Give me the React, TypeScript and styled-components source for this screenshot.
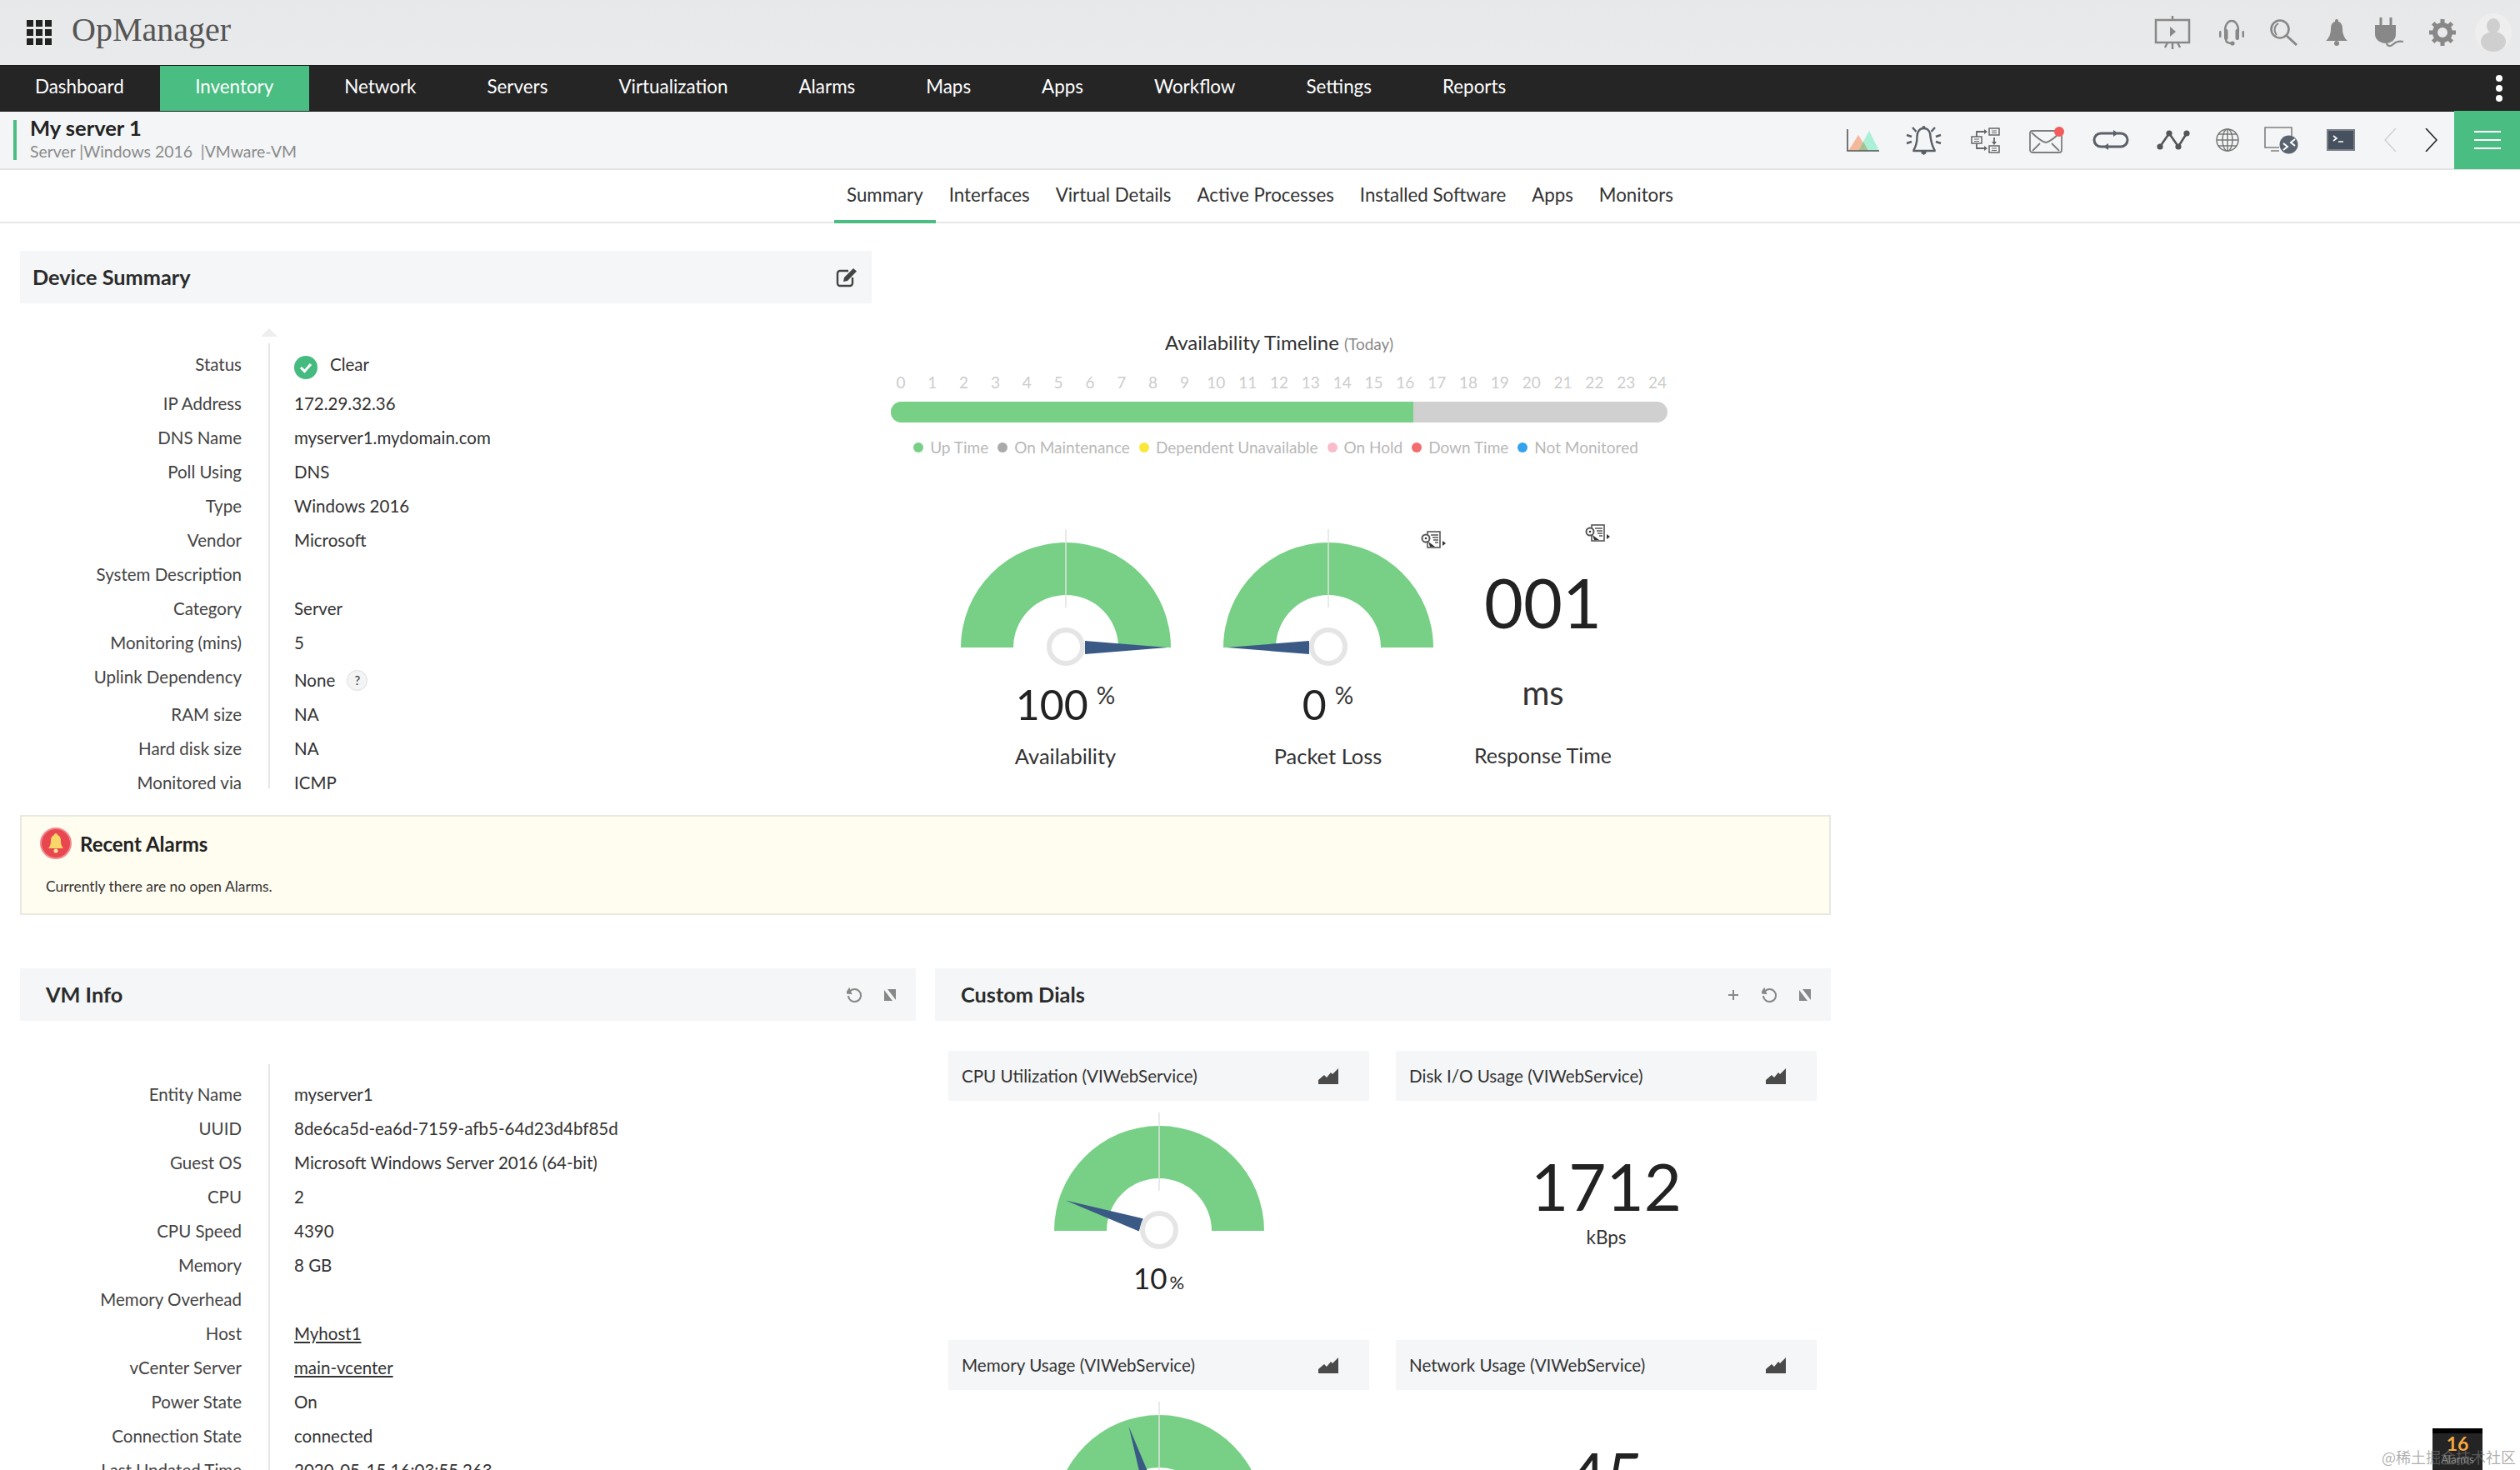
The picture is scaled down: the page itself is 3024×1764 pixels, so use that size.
import React from 'react';
import styled, { createGlobalStyle } from 'styled-components';

const GlobalStyle = createGlobalStyle`
  html, body {
    margin: 0;
    padding: 0;
    background: #fff;
    font-family: Lato, "Open Sans", sans-serif;
    color: #333;
  }
`;

const Page = styled.div`
  position: relative;
  width: 3024px;
  height: 1764px;
  overflow: hidden;
  background: #fff;
`;

const TopBar = styled.header`
  height: 78px;
  display: flex;
  align-items: center;
  background: linear-gradient(#e7e8e9, #e9eaeb);
`;

const AppGrid = styled.svg`
  width: 30px;
  height: 30px;
  margin-left: 32px;
`;

const Logo = styled.div`
  margin-left: 24px;
  font-family: "Liberation Serif", serif;
  font-size: 40px;
  color: #555;
  line-height: 72px;
  height: 78px;
`;

const TopIcons = styled.div`
  margin-left: auto;
  display: flex;
  align-items: center;
  height: 100%;
`;

const IconSlot = styled.div<{ $w: number }>`
  width: ${({ $w }) => $w}px;
  height: 100%;
  display: flex;
  align-items: center;
  justify-content: center;
  flex: none;
`;

const NavBar = styled.nav`
  height: 56px;
  display: flex;
  background: #252525;
  border-top: 1px solid #1a1a1a;
  border-bottom: 1px solid #1a1a1a;
  box-sizing: border-box;
`;

const NavItem = styled.div<{ $active?: boolean }>`
  padding: 0 42.5px;
  font-size: 22.4px;
  line-height: 50px;
  color: #fff;
  background: ${({ $active }) => ($active ? '#4abd83' : 'transparent')};
  &:first-child {
    padding-left: 42px;
    padding-right: 43px;
  }
`;

const NavDots = styled.div`
  margin-left: auto;
  padding-right: 21px;
  display: flex;
  flex-direction: column;
  justify-content: center;
  gap: 4px;
`;

const NavDot = styled.span`
  width: 8px;
  height: 8px;
  border-radius: 50%;
  background: #fff;
`;

const DeviceBar = styled.div`
  display: flex;
  align-items: center;
  background: #f3f5f6;
  border-bottom: 2px solid #e3e4e5;
  height: 68px;
`;

const AccentBar = styled.span`
  width: 4px;
  height: 48px;
  margin-left: 16px;
  background: #4abd83;
`;

const DeviceTitle = styled.div`
  margin: -3px 0 0 16px;
`;

const DeviceName = styled.div`
  font-size: 25.5px;
  font-weight: 700;
  line-height: 30px;
  color: #222;
`;

const DeviceMeta = styled.div`
  font-size: 19.4px;
  line-height: 28px;
  color: #8a8a8a;
`;

const DeviceActions = styled.div`
  margin-left: auto;
  display: flex;
  height: 100%;
  align-items: center;
`;

const MenuBlock = styled.div`
  width: 79px;
  height: 70px;
  margin-left: 3px;
  background: #4abd83;
  display: flex;
  align-items: center;
  justify-content: center;
`;

const Tabs = styled.div`
  height: 62px;
  display: flex;
  justify-content: center;
  border-bottom: 2px solid #e6e7e8;
`;

const Tab = styled.div<{ $active?: boolean }>`
  padding: 0 15.5px;
  font-size: 22.3px;
  line-height: 60px;
  height: 64px;
  box-sizing: border-box;
  color: #333;
  border-bottom: 4px solid ${({ $active }) => ($active ? '#4abd83' : 'transparent')};
`;

const Content = styled.main`
  width: 2173px;
  margin-left: 24px;
`;

const SummaryRow = styled.section`
  display: flex;
  padding-top: 33px;
`;

const SummaryLeft = styled.div`
  width: 1022px;
  flex: none;
`;

const SummaryRight = styled.div`
  flex: 1;
  padding-top: 96px;
`;

const PanelHeader = styled.div<{ $inset: number; $right?: number }>`
  height: 63px;
  display: flex;
  align-items: center;
  justify-content: space-between;
  padding: 0 ${({ $right }) => $right ?? 24}px 0 ${({ $inset }) => $inset}px;
  background: #f4f6f7;
`;

const PanelTitle = styled.h2`
  margin: 0 0 2px;
  font-size: 25.3px;
  font-weight: 700;
  color: #2b2b2b;
`;

const PanelTools = styled.div`
  display: flex;
  align-items: center;
  gap: 27px;
`;

const InfoList = styled.div<{ $top: number }>`
  position: relative;
  margin-top: ${({ $top }) => $top}px;
  &::before {
    content: '';
    position: absolute;
    left: 298px;
    top: 0;
    bottom: 14px;
    width: 2px;
    background: #e6e6e6;
  }
`;

const InfoCaret = styled.span`
  position: absolute;
  left: 289px;
  top: -18px;
  border-left: 10px solid transparent;
  border-right: 10px solid transparent;
  border-bottom: 10px solid #eeeeee;
`;

const InfoRow = styled.div<{ $h?: number; $shift?: number }>`
  display: grid;
  grid-template-columns: 266px 1fr;
  column-gap: 63px;
  height: ${({ $h }) => $h ?? 41}px;
  padding-top: ${({ $shift }) => $shift ?? 0}px;
  box-sizing: border-box;
  font-size: 20.5px;
  line-height: 40px;
`;

const InfoLabel = styled.div`
  text-align: right;
  color: #444;
`;

const InfoValue = styled.div<{ $drop?: number }>`
  display: flex;
  align-items: center;
  height: 40px;
  padding-top: ${({ $drop }) => $drop ?? 0}px;
  color: #333;
`;

const ValueLink = styled.span`
  text-decoration: underline;
`;

const StatusIcon = styled.svg`
  width: 28px;
  height: 28px;
  margin: 8px 15px 0 0;
`;

const HelpBadge = styled.span`
  width: 25px;
  height: 25px;
  margin-left: 14px;
  border-radius: 50%;
  background: #f4f4f4;
  border: 1px solid #dedede;
  box-sizing: border-box;
  font-size: 15px;
  line-height: 23px;
  text-align: center;
`;

const TimelineTitle = styled.div`
  padding-left: 23px;
  width: 932px;
  text-align: center;
  font-size: 24px;
  line-height: 28px;
  color: #333;
`;

const TimelineToday = styled.span`
  font-size: 19px;
  color: #888;
`;

const Hours = styled.div`
  display: grid;
  grid-template-columns: repeat(25, 1fr);
  width: 946px;
  margin: 21px 0 0 16px;
  font-size: 19px;
  line-height: 22px;
  text-align: center;
  color: #cccccc;
`;

const TimelineBar = styled.div`
  width: 932px;
  height: 25px;
  margin: 12px 0 0 23px;
  border-radius: 13px;
  background: #d0d0d0;
  overflow: hidden;
`;

const TimelineFill = styled.div`
  height: 100%;
  background: #77d086;
`;

const Legend = styled.div`
  display: flex;
  justify-content: center;
  gap: 11px;
  width: 932px;
  margin: 19px 0 0 19px;
  font-size: 19px;
  line-height: 22px;
  color: #b8b8b8;
`;

const LegendItem = styled.div`
  display: flex;
  align-items: center;
  gap: 8px;
`;

const LegendDot = styled.span<{ $color: string }>`
  width: 12px;
  height: 12px;
  border-radius: 50%;
  background: ${({ $color }) => $color};
`;

const GaugeRow = styled.div`
  display: grid;
  grid-template-columns: 315px 315px 201px;
  margin: 87px 0 0 75px;
`;

const GaugeCell = styled.div`
  position: relative;
  display: flex;
  flex-direction: column;
  align-items: center;
`;

const GaugeSvg = styled.svg`
  width: 272px;
  height: 168px;
  display: block;
`;

const ReportIcon = styled.svg<{ $left: number; $top: number }>`
  position: absolute;
  left: ${({ $left }) => $left}px;
  top: ${({ $top }) => $top}px;
  width: 30px;
  height: 21px;
`;

const GaugeValue = styled.div`
  display: flex;
  align-items: flex-start;
  gap: 10px;
  margin-top: 12px;
  height: 60px;
  font-size: 50px;
  line-height: 60px;
  color: #222;
`;

const GaugeUnit = styled.span`
  font-size: 28px;
  line-height: 38px;
  color: #333;
`;

const GaugeLabel = styled.div`
  margin-top: 17px;
  font-size: 25.5px;
  line-height: 30px;
  color: #333;
`;

const BigNumber = styled.div`
  font-size: 81px;
  line-height: 90px;
  color: #222;
`;

const ResponseValue = styled(BigNumber)`
  margin-top: 43px;
`;

const ResponseUnit = styled.div`
  margin-top: 38px;
  font-size: 40px;
  line-height: 50px;
  color: #333;
`;

const ResponseLabel = styled(GaugeLabel)`
  margin-top: 35px;
  font-size: 25px;
`;

const AlarmBox = styled.section`
  height: 120px;
  margin-top: 18px;
  padding: 13px 0 0 22px;
  box-sizing: border-box;
  background: #fffcf0;
  border: 2px solid #e9e9e2;
`;

const AlarmHead = styled.div`
  display: flex;
  align-items: center;
  gap: 10px;
  height: 38px;
`;

const AlarmIcon = styled.svg`
  width: 38px;
  height: 38px;
`;

const AlarmTitle = styled.div`
  font-size: 24px;
  font-weight: 700;
  color: #222;
`;

const AlarmText = styled.div`
  margin-top: 21px;
  padding-left: 7px;
  font-size: 17.4px;
  line-height: 24px;
  color: #333;
`;

const LowerRow = styled.section`
  display: grid;
  grid-template-columns: 1075px 1075px;
  column-gap: 23px;
  margin-top: 64px;
`;

const DialGrid = styled.div`
  display: grid;
  grid-template-columns: 505px 505px;
  column-gap: 32px;
  padding: 36px 0 0 16px;
`;

const DialCard = styled.div`
  height: 347px;
`;

const DialHeader = styled.div`
  height: 60px;
  display: flex;
  align-items: center;
  justify-content: space-between;
  padding: 0 37px 0 16px;
  background: #f4f6f7;
  font-size: 20.6px;
  line-height: 54px;
  color: #333;
`;

const DialBody = styled.div`
  display: flex;
  flex-direction: column;
  align-items: center;
  padding-top: 14px;
`;

const DialValue = styled.div`
  display: flex;
  align-items: baseline;
  gap: 3px;
  margin-top: 10px;
  font-size: 35px;
  line-height: 40px;
  color: #222;
`;

const DialPercent = styled.span`
  font-size: 22px;
`;

const DialNumber = styled(BigNumber)`
  margin-top: 43px;
  font-size: 78px;
`;

const DialUnit = styled.div`
  margin-top: 2px;
  font-size: 22.5px;
  line-height: 30px;
  color: #333;
`;

const AlarmBadge = styled.div`
  position: absolute;
  left: 2919px;
  top: 1714px;
  width: 60px;
  height: 50px;
  box-sizing: border-box;
  background: #242424;
  border-top: 6px solid #000;
  text-align: center;
`;

const BadgeCount = styled.div`
  font-size: 23px;
  font-weight: 700;
  line-height: 24px;
  color: #f5a742;
`;

const BadgeLabel = styled.div`
  font-size: 13px;
  line-height: 14px;
  color: #8f8f8f;
`;

const Watermark = styled.div`
  position: absolute;
  left: 2858px;
  top: 1736px;
  font-family: "Noto Sans CJK SC", sans-serif;
  font-size: 18px;
  line-height: 24px;
  color: rgba(120, 120, 120, 0.6);
  white-space: nowrap;
`;

const navItems = ['Dashboard', 'Inventory', 'Network', 'Servers', 'Virtualization', 'Alarms', 'Maps', 'Apps', 'Workflow', 'Settings', 'Reports'];
const tabs = ['Summary', 'Interfaces', 'Virtual Details', 'Active Processes', 'Installed Software', 'Apps', 'Monitors'];
const legend = [
  ['Up Time', '#77d086'],
  ['On Maintenance', '#aaaaaa'],
  ['Dependent Unavailable', '#fbe73a'],
  ['On Hold', '#f9bccb'],
  ['Down Time', '#f26d6d'],
  ['Not Monitored', '#35a2ec'],
];
const vmInfo: [string, React.ReactNode][] = [
  ['Entity Name', 'myserver1'],
  ['UUID', '8de6ca5d-ea6d-7159-afb5-64d23d4bf85d'],
  ['Guest OS', 'Microsoft Windows Server 2016 (64-bit)'],
  ['CPU', '2'],
  ['CPU Speed', '4390'],
  ['Memory', '8 GB'],
  ['Memory Overhead', ''],
  ['Host', <ValueLink>Myhost1</ValueLink>],
  ['vCenter Server', <ValueLink>main-vcenter</ValueLink>],
  ['Power State', 'On'],
  ['Connection State', 'connected'],
  ['Last Updated Time', '2020-05-15 16:03:55.263'],
];

const Gauge: React.FC<{ percent: number; reach?: number }> = ({ percent, reach = 122 }) => {
  const a = ((180 - percent * 1.8) * Math.PI) / 180;
  const ux = Math.cos(a);
  const uy = -Math.sin(a);
  const base = 23;
  const tip = `${(ux * reach).toFixed(1)},${(uy * reach).toFixed(1)}`;
  const b1 = `${(ux * base - uy * 8).toFixed(1)},${(uy * base + ux * 8).toFixed(1)}`;
  const b2 = `${(ux * base + uy * 8).toFixed(1)},${(uy * base - ux * 8).toFixed(1)}`;
  return (
    <GaugeSvg viewBox="-136 -142 272 168">
      <path d="M-126 0A126 126 0 0 1 126 0L63 0A63 63 0 0 0 -63 0Z" fill="#77d086" />
      <line x1="0" y1="-142" x2="0" y2="-48" stroke="#dfe3df" strokeWidth="1.5" />
      <polygon points={`${tip} ${b1} ${b2}`} fill="#3a5a85" />
      <circle cx="0" cy="-1" r="20" fill="#fff" stroke="#e5e5e5" strokeWidth="6" />
    </GaugeSvg>
  );
};

const Report: React.FC<{ left: number; top: number }> = ({ left, top }) => (
  <ReportIcon $left={left} $top={top} viewBox="0 0 30 21" fill="none">
    <rect x="8" y="1" width="15" height="19" fill="#fff" stroke="#555" strokeWidth="1.6" />
    <path d="M12 5h9M14 8h7M15 11h6M17 14h4" stroke="#555" strokeWidth="1.3" />
    <circle cx="6" cy="9" r="4.5" fill="#fff" stroke="#555" strokeWidth="2" />
    <circle cx="6" cy="9" r="1.3" fill="#333" />
    <path d="M9 13l8 6h-6z" fill="#333" />
    <path d="M26 12l4 3-4 3z" fill="#333" />
  </ReportIcon>
);

const Refresh = () => (
  <svg width="18" height="20" viewBox="0 0 18 20" fill="none" stroke="#888" strokeWidth="2">
    <path d="M3.5 6A7.5 7.5 0 1 1 2 11" />
    <path d="M0 7.5l3-4.5 2 5z" fill="#888" />
  </svg>
);

const Collapse = () => (
  <svg width="14" height="14" viewBox="0 0 14 14" fill="#888">
    <polygon points="0,1 0,14 10,14" />
    <polygon points="4,0 14,0 14,13" />
  </svg>
);

const Plus = () => (
  <svg width="14" height="14" viewBox="0 0 14 14" stroke="#888" strokeWidth="2">
    <path d="M7 1v12M1 7h12" />
  </svg>
);

const Edit = () => (
  <svg width="26" height="24" viewBox="0 0 26 24" fill="none" stroke="#444" strokeWidth="2.4">
    <path d="M20 12v7a3 3 0 0 1-3 3H5a3 3 0 0 1-3-3V7a3 3 0 0 1 3-3h10" />
    <path d="M9 17l1-5L21 1l4 3.5L14 16z" fill="#444" stroke="none" />
  </svg>
);

const MiniChart = () => (
  <svg width="24" height="19" viewBox="0 0 24 19" fill="#4a4a4a">
    <polygon points="0,19 0,14 7,8 10,11 15,5 17,7 24,0 24,19" />
  </svg>
);

const iconGray = '#888';

const PresentIcon = () => (
  <svg width="44" height="40" viewBox="0 0 44 40" fill="none" stroke={iconGray} strokeWidth="2.5">
    <rect x="2" y="5" width="40" height="27" />
    <path d="M22 0v5M22 32v8M13 38l3-6M31 38l-3-6" />
    <path d="M19 13l7 6-7 6z" fill={iconGray} stroke="none" />
  </svg>
);

const HeadsetIcon = () => (
  <svg width="30" height="32" viewBox="0 0 30 32" fill="none" stroke={iconGray} strokeWidth="2.4">
    <path d="M7 14C7 -2 23 -2 23 14" />
    <path d="M8 24c0 4 3 5 7 5" />
    <rect x="6" y="12" width="4.5" height="13" rx="2" fill={iconGray} stroke="none" />
    <rect x="19.500" y="12" width="4.5" height="13" rx="2" fill={iconGray} stroke="none" />
    <rect x="0" y="14" width="2.5" height="8" rx="1.2" fill={iconGray} stroke="none" />
    <rect x="27.500" y="14" width="2.5" height="8" rx="1.2" fill={iconGray} stroke="none" />
    <circle cx="16" cy="29" r="2.6" fill={iconGray} stroke="none" />
  </svg>
);

const SearchIcon = () => (
  <svg width="34" height="32" viewBox="0 0 34 32" fill="none" stroke={iconGray}>
    <circle cx="13" cy="12" r="10.5" strokeWidth="2.6" />
    <path d="M9 19C5 14 6 8 11 5" strokeWidth="2" />
    <path d="M21 20l12 11" strokeWidth="3" />
  </svg>
);

const BellIcon = () => (
  <svg width="26" height="32" viewBox="0 0 26 32" fill={iconGray}>
    <path d="M13 0c2 0 2 2 2 3 4 1 5 5 5 9 0 5 2 11 6 14H0c4-3 6-9 6-14 0-4 1-8 5-9 0-1 0-3 2-3z" />
    <circle cx="13" cy="29" r="3" />
  </svg>
);

const PlugIcon = () => (
  <svg width="36" height="36" viewBox="0 0 36 36" fill="none" stroke={iconGray}>
    <path d="M8 0v9M20 0v9" strokeWidth="3" />
    <path d="M1 9h25v11c0 7-6 11-12 11S1 27 1 20z" fill={iconGray} stroke="none" />
    <path d="M15 31c1 4 5 4 8 1s6-4 12-3" strokeWidth="2.2" />
  </svg>
);

const GearIcon = () => (
  <svg width="32" height="32" viewBox="0 0 32 32" fill="none" stroke={iconGray}>
    <circle cx="16" cy="16" r="9" strokeWidth="6" />
    <path d="M16 0v6M16 26v6M0 16h6M26 16h6M4.700 4.700l4.200 4.200M23.100 23.100l4.200 4.200M4.700 27.300l4.200-4.200M23.100 8.900l4.200-4.200" strokeWidth="5" />
  </svg>
);

const AvatarIcon = () => (
  <svg width="44" height="46" viewBox="0 0 44 46">
    <rect x="0" y="0" width="44" height="46" rx="22" fill="#eeeeee" />
    <ellipse cx="22" cy="15" rx="8" ry="9" fill="#cfcfcf" />
    <ellipse cx="22" cy="34" rx="15" ry="12" fill="#cfcfcf" />
  </svg>
);

const AreaIcon = () => (
  <svg width="40" height="28" viewBox="0 0 40 28">
    <polygon points="2,27 14,8 26,27" fill="#f4b99c" />
    <polygon points="14,27 27,3 39,27" fill="#abefd6" />
    <polygon points="14,27 20,16 26,27" fill="#a8bf8f" />
    <path d="M1 1v26h38" fill="none" stroke="#555" strokeWidth="1.6" />
  </svg>
);

const AlarmActionIcon = () => (
  <svg width="43" height="35" viewBox="0 0 43 35" fill="none" stroke="#5a5f66" strokeWidth="2.4">
    <path d="M21.500 3c-5 0-8 4-8 10 0 7-1 11-4 16v1h25v-1c-3-5-4-9-5-16 0-6-3-10-8-10z" />
    <circle cx="21.500" cy="2" r="2" fill="#5a5f66" stroke="none" />
    <path d="M18.500 31h6v2l-3 2-3-2z" fill="#5a5f66" stroke="none" />
    <path d="M8 2l4.500 5M35 2l-4.500 5M1 11l6 2M1 21l6-2M42 11l-6 2M42 21l-6-2" />
  </svg>
);

const FlowIcon = () => (
  <svg width="35" height="31" viewBox="0 0 35 31" fill="none" stroke="#666" strokeWidth="1.5">
    <rect x="22" y="1" width="12" height="8" />
    <rect x="1" y="11" width="12" height="8" />
    <rect x="22" y="22" width="12" height="8" />
    <path d="M25 4h6M25 6.500h6M4 14h6M4 16.500h6M25 25h6M25 27.500h6" strokeWidth="1.2" />
    <path d="M7 11V5h10M7 19v6h10M28 12v7" strokeWidth="1.8" />
    <path d="M16 2l4 3-4 3zM16 22l4 3-4 3zM25 17h6l-3 4z" fill="#666" stroke="none" />
  </svg>
);

const MailIcon = () => (
  <svg width="44" height="32" viewBox="0 0 44 32" fill="none" stroke="#7e7e7e" strokeWidth="1.8">
    <rect x="1" y="5" width="38" height="26" rx="3" />
    <path d="M3 7c6 6 12 11 17 12 5-1 11-6 17-12M4 29l9-9M36 29l-9-9" />
    <circle cx="36" cy="6" r="6" fill="#f25c5c" stroke="none" />
  </svg>
);

const LoopIcon = () => (
  <svg width="44" height="24" viewBox="0 0 44 24" fill="none" stroke="#5c6067" strokeWidth="3">
    <path d="M15 20H10a8 8 0 0 1 0-16h16" />
    <path d="M29 4h5a8 8 0 0 1 0 16H18" />
    <path d="M25 0l6 4-6 4zM19 16l-6 4 6 4z" fill="#5c6067" stroke="none" />
  </svg>
);

const GraphIcon = () => (
  <svg width="40" height="24" viewBox="0 0 40 24" fill="none" stroke="#555" strokeWidth="2.6">
    <path d="M4 20L15 4l11 16L36 4" />
    <g fill="#555" stroke="none">
      <circle cx="4" cy="20" r="3.600" />
      <circle cx="15" cy="4" r="3.600" />
      <circle cx="26" cy="20" r="3.600" />
      <circle cx="36" cy="4" r="3.600" />
    </g>
  </svg>
);

const GlobeIcon = () => (
  <svg width="28" height="28" viewBox="0 0 28 28" fill="none" stroke="#777" strokeWidth="1.5">
    <circle cx="14" cy="14" r="13" />
    <ellipse cx="14" cy="14" rx="6" ry="13" />
    <path d="M14 1v26M1 14h26M3 7h22M3 21h22" />
  </svg>
);

const RemoteIcon = () => (
  <svg width="41" height="33" viewBox="0 0 41 33" fill="none" stroke="#808080" strokeWidth="1.6">
    <path d="M33 11V1H1v24h17M8 29h10" />
    <circle cx="29.500" cy="21.500" r="11" fill="#5a6470" stroke="none" />
    <path d="M37 15l-5 4 5 4M23 20l5 4-5 4" stroke="#fff" strokeWidth="2" />
  </svg>
);

const TerminalIcon = () => (
  <svg width="34" height="26" viewBox="0 0 34 26">
    <rect x="0" y="0" width="34" height="26" fill="#7a7f86" />
    <rect x="2" y="2" width="30" height="22" fill="#46505e" />
    <path d="M8 8l4 3-4 3M14 15h6" fill="none" stroke="#fff" strokeWidth="1.6" />
  </svg>
);

const Chevron: React.FC<{ dir: 'left' | 'right'; color: string }> = ({ dir, color }) => (
  <svg width="15" height="28" viewBox="0 0 15 28" fill="none" stroke={color} strokeWidth="1.6">
    <path d={dir === 'left' ? 'M14 0L1 14l13 14' : 'M1 0l13 14L1 28'} />
  </svg>
);

const App: React.FC = () => {
  return (
    <Page>
      <GlobalStyle />
      <TopBar>
        <AppGrid viewBox="0 0 30 30" fill="#222">
          {[0, 11, 22].map((y) => [0, 11, 22].map((x) => <rect key={`${x}-${y}`} x={x} y={y} width="8" height="8" />))}
        </AppGrid>
        <Logo>OpManager</Logo>
        <TopIcons>
          <IconSlot $w={90}><PresentIcon /></IconSlot>
          <IconSlot $w={52}><HeadsetIcon /></IconSlot>
          <IconSlot $w={72}><SearchIcon /></IconSlot>
          <IconSlot $w={55}><BellIcon /></IconSlot>
          <IconSlot $w={71}><PlugIcon /></IconSlot>
          <IconSlot $w={58}><GearIcon /></IconSlot>
          <IconSlot $w={64}><AvatarIcon /></IconSlot>
        </TopIcons>
      </TopBar>

      <NavBar>
        {navItems.map((item) => (
          <NavItem key={item} $active={item === 'Inventory'}>{item}</NavItem>
        ))}
        <NavDots>
          <NavDot />
          <NavDot />
          <NavDot />
        </NavDots>
      </NavBar>

      <DeviceBar>
        <AccentBar />
        <DeviceTitle>
          <DeviceName>My server 1</DeviceName>
          <DeviceMeta>Server |Windows 2016 &nbsp;|VMware-VM</DeviceMeta>
        </DeviceTitle>
        <DeviceActions>
          <IconSlot $w={72}><AreaIcon /></IconSlot>
          <IconSlot $w={72}><AlarmActionIcon /></IconSlot>
          <IconSlot $w={76}><FlowIcon /></IconSlot>
          <IconSlot $w={74}><MailIcon /></IconSlot>
          <IconSlot $w={78}><LoopIcon /></IconSlot>
          <IconSlot $w={72}><GraphIcon /></IconSlot>
          <IconSlot $w={57}><GlobeIcon /></IconSlot>
          <IconSlot $w={73}><RemoteIcon /></IconSlot>
          <IconSlot $w={70}><TerminalIcon /></IconSlot>
          <IconSlot $w={48}><Chevron dir="left" color="#cfd2d4" /></IconSlot>
          <IconSlot $w={50}><Chevron dir="right" color="#222" /></IconSlot>
          <MenuBlock>
            <svg width="32" height="24" viewBox="0 0 32 24" stroke="#fff" strokeWidth="2">
              <path d="M0 2h32M0 12h32M0 22h32" />
            </svg>
          </MenuBlock>
        </DeviceActions>
      </DeviceBar>

      <Tabs>
        {tabs.map((tab) => (
          <Tab key={tab} $active={tab === 'Summary'}>{tab}</Tab>
        ))}
      </Tabs>

      <Content>
        <SummaryRow>
          <SummaryLeft>
            <PanelHeader $inset={15} $right={17}>
              <PanelTitle>Device Summary</PanelTitle>
              <Edit />
            </PanelHeader>
            <InfoList $top={48}>
              <InfoCaret />
              <InfoRow $h={52} $shift={5}>
                <InfoLabel>Status</InfoLabel>
                <InfoValue>
                  <StatusIcon viewBox="0 0 28 28">
                    <circle cx="14" cy="14" r="14" fill="#45bb7f" />
                    <path d="M8 14l4.500 4.500L20 10" fill="none" stroke="#fff" strokeWidth="3" />
                  </StatusIcon>
                  Clear
                </InfoValue>
              </InfoRow>
              <InfoRow><InfoLabel>IP Address</InfoLabel><InfoValue>172.29.32.36</InfoValue></InfoRow>
              <InfoRow><InfoLabel>DNS Name</InfoLabel><InfoValue>myserver1.mydomain.com</InfoValue></InfoRow>
              <InfoRow><InfoLabel>Poll Using</InfoLabel><InfoValue>DNS</InfoValue></InfoRow>
              <InfoRow><InfoLabel>Type</InfoLabel><InfoValue>Windows 2016</InfoValue></InfoRow>
              <InfoRow><InfoLabel>Vendor</InfoLabel><InfoValue>Microsoft</InfoValue></InfoRow>
              <InfoRow><InfoLabel>System Description</InfoLabel><InfoValue /></InfoRow>
              <InfoRow><InfoLabel>Category</InfoLabel><InfoValue>Server</InfoValue></InfoRow>
              <InfoRow><InfoLabel>Monitoring (mins)</InfoLabel><InfoValue>5</InfoValue></InfoRow>
              <InfoRow $h={45}>
                <InfoLabel>Uplink Dependency</InfoLabel>
                <InfoValue $drop={4}>None<HelpBadge>?</HelpBadge></InfoValue>
              </InfoRow>
              <InfoRow><InfoLabel>RAM size</InfoLabel><InfoValue>NA</InfoValue></InfoRow>
              <InfoRow><InfoLabel>Hard disk size</InfoLabel><InfoValue>NA</InfoValue></InfoRow>
              <InfoRow><InfoLabel>Monitored via</InfoLabel><InfoValue>ICMP</InfoValue></InfoRow>
            </InfoList>
          </SummaryLeft>

          <SummaryRight>
            <TimelineTitle>Availability Timeline <TimelineToday>(Today)</TimelineToday></TimelineTitle>
            <Hours>
              {Array.from({ length: 25 }, (_, h) => <span key={h}>{h}</span>)}
            </Hours>
            <TimelineBar>
              <TimelineFill style={{ width: `${(627 / 932) * 100}%` }} />
            </TimelineBar>
            <Legend>
              {legend.map(([name, color]) => (
                <LegendItem key={name}><LegendDot $color={color} />{name}</LegendItem>
              ))}
            </Legend>
            <GaugeRow>
              <GaugeCell>
                <Gauge percent={100} />
                <GaugeValue>100<GaugeUnit>%</GaugeUnit></GaugeValue>
                <GaugeLabel>Availability</GaugeLabel>
              </GaugeCell>
              <GaugeCell>
                <Gauge percent={0} />
                <Report left={269} top={2} />
                <GaugeValue>0<GaugeUnit>%</GaugeUnit></GaugeValue>
                <GaugeLabel>Packet Loss</GaugeLabel>
              </GaugeCell>
              <GaugeCell>
                <Report left={151} top={-6} />
                <ResponseValue>001</ResponseValue>
                <ResponseUnit>ms</ResponseUnit>
                <ResponseLabel>Response Time</ResponseLabel>
              </GaugeCell>
            </GaugeRow>
          </SummaryRight>
        </SummaryRow>

        <AlarmBox>
          <AlarmHead>
            <AlarmIcon viewBox="0 0 38 38">
              <circle cx="19" cy="19" r="18" fill="#e8474f" stroke="#f08a8e" strokeWidth="2" />
              <path d="M19 7c1.500 0 2 1 2 2 3 1 4 4 4 7 0 4 1 7 3 9H10c2-2 3-5 3-9 0-3 1-6 4-7 0-1 .5-2 2-2z" fill="#f8d66a" />
              <circle cx="19" cy="28" r="2.500" fill="#f8e39a" />
            </AlarmIcon>
            <AlarmTitle>Recent Alarms</AlarmTitle>
          </AlarmHead>
          <AlarmText>Currently there are no open Alarms.</AlarmText>
        </AlarmBox>

        <LowerRow>
          <div>
            <PanelHeader $inset={31}>
              <PanelTitle>VM Info</PanelTitle>
              <PanelTools><Refresh /><Collapse /></PanelTools>
            </PanelHeader>
            <InfoList $top={52}>
              {vmInfo.map(([label, value], i) => (
                <InfoRow key={label} $shift={i === 0 ? 16 : 0} $h={i === 0 ? 57 : 41}>
                  <InfoLabel>{label}</InfoLabel>
                  <InfoValue>{value}</InfoValue>
                </InfoRow>
              ))}
            </InfoList>
          </div>
          <div>
            <PanelHeader $inset={31}>
              <PanelTitle>Custom Dials</PanelTitle>
              <PanelTools><Plus /><Refresh /><Collapse /></PanelTools>
            </PanelHeader>
            <DialGrid>
              <DialCard>
                <DialHeader>CPU Utilization (VIWebService)<MiniChart /></DialHeader>
                <DialBody>
                  <Gauge percent={10} reach={118} />
                  <DialValue>10<DialPercent>%</DialPercent></DialValue>
                </DialBody>
              </DialCard>
              <DialCard>
                <DialHeader>Disk I/O Usage (VIWebService)<MiniChart /></DialHeader>
                <DialBody>
                  <DialNumber>1712</DialNumber>
                  <DialUnit>kBps</DialUnit>
                </DialBody>
              </DialCard>
              <DialCard>
                <DialHeader>Memory Usage (VIWebService)<MiniChart /></DialHeader>
                <DialBody>
                  <Gauge percent={40} reach={118} />
                </DialBody>
              </DialCard>
              <DialCard>
                <DialHeader>Network Usage (VIWebService)<MiniChart /></DialHeader>
                <DialBody>
                  <DialNumber>45</DialNumber>
                </DialBody>
              </DialCard>
            </DialGrid>
          </div>
        </LowerRow>
      </Content>

      <AlarmBadge>
        <BadgeCount>16</BadgeCount>
        <BadgeLabel>Alarms</BadgeLabel>
      </AlarmBadge>
      <Watermark>@稀土掘金技术社区</Watermark>
    </Page>
  );
};

export default App;
